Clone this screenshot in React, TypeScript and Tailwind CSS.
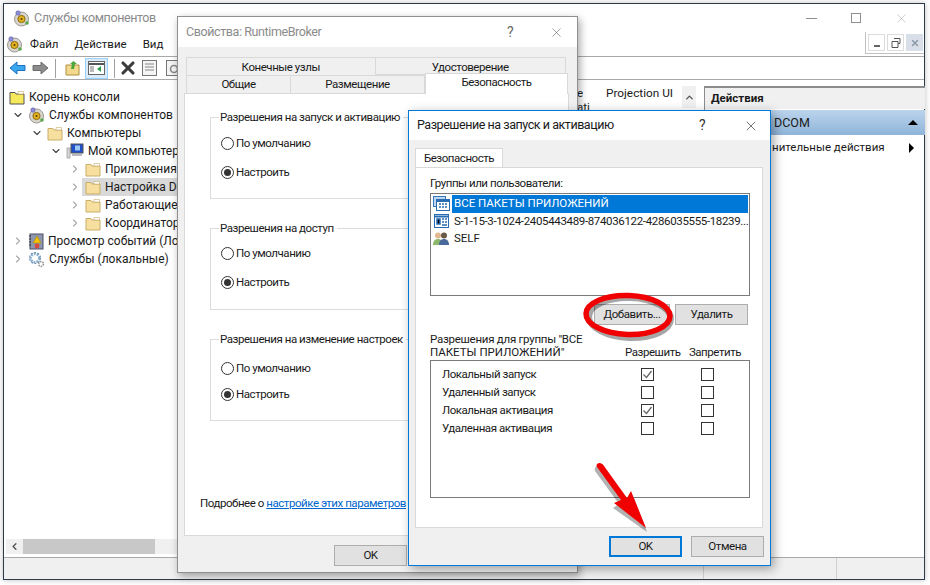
import { ChevronDown, ChevronRight, X } from "lucide-react";
import type { ReactNode } from "react";

const font = "font-['Roboto','Noto_Sans',sans-serif]";

function ServicesIcon() {
  return (
    <svg width="17" height="17" viewBox="0 0 17 17" className="shrink-0">
      <circle cx="8.5" cy="9" r="7" fill="#d8d4ce" stroke="#9c9890" />
      <circle cx="8.5" cy="9" r="3.6" fill="#e3b21c" stroke="#8a6a10" />
      <circle cx="8.5" cy="9" r="1.1" fill="#5a4208" />
      <circle cx="5" cy="3" r="2.2" fill="#8e8fd8" stroke="#5a5aa0" strokeWidth="0.6" />
      <circle cx="14" cy="13" r="1.8" fill="#58a848" />
    </svg>
  );
}

function FolderIcon({ root }: { root?: boolean }) {
  return (
    <svg width="16" height="15" viewBox="0 0 16 15" className="shrink-0">
      <path d="M1 2.5h5l1 1.5h8v10H1z" fill={root ? "#f6ea5c" : "#f7df9f"} stroke={root ? "#555" : "#c9ad68"} />
      <path d="M9 1.5h5.5v2.5H9z" fill="#fff" stroke="#c9ad68" strokeWidth="0.6" />
    </svg>
  );
}

function ComputerIcon() {
  return (
    <svg width="18" height="16" viewBox="0 0 18 16" className="shrink-0">
      <rect x="1" y="5" width="3" height="10" fill="#d8d8d8" stroke="#888" strokeWidth="0.6" />
      <rect x="5" y="1" width="12" height="9" fill="#1f50c8" stroke="#555" />
      <rect x="9" y="2.5" width="5" height="5" fill="#9cc8f4" />
      <rect x="6" y="11" width="10" height="2" fill="#b8b8c0" />
    </svg>
  );
}

function EventIcon() {
  return (
    <svg width="16" height="17" viewBox="0 0 16 17" className="shrink-0">
      <rect x="2" y="1" width="13" height="15" fill="#8e97ad" stroke="#4a5168" />
      <path d="M1 3h2M1 6h2M1 9h2M1 12h2" stroke="#333" />
      <path d="M9 3l4 7H5z" fill="#f2c200" stroke="#a37f00" strokeWidth="0.5" />
      <circle cx="9" cy="13" r="2.4" fill="#d84a3c" />
    </svg>
  );
}

function GearIcon() {
  return (
    <svg width="17" height="17" viewBox="0 0 17 17" className="shrink-0">
      <circle cx="7" cy="7" r="4.2" fill="none" stroke="#8fb2cf" strokeWidth="2.4" strokeDasharray="2 1" />
      <circle cx="7" cy="7" r="5.4" fill="none" stroke="#6f95b8" strokeWidth="1.2" strokeDasharray="2 1.4" />
      <circle cx="13" cy="13" r="2.4" fill="none" stroke="#9a9a9a" strokeWidth="1.6" strokeDasharray="1.5 0.8" />
    </svg>
  );
}

type TreeItem = { depth: number; label: string; icon: ReactNode; open?: boolean; arrow?: boolean; selected?: boolean };

const treeItems: TreeItem[] = [
  { depth: 0, label: "Корень консоли", icon: <FolderIcon root />, arrow: false },
  { depth: 0, label: "Службы компонентов", icon: <ServicesIcon />, open: true, arrow: true },
  { depth: 1, label: "Компьютеры", icon: <FolderIcon />, open: true, arrow: true },
  { depth: 2, label: "Мой компьютер", icon: <ComputerIcon />, open: true, arrow: true },
  { depth: 3, label: "Приложения COM+", icon: <FolderIcon />, arrow: true },
  { depth: 3, label: "Настройка DCOM", icon: <FolderIcon />, arrow: true, selected: true },
  { depth: 3, label: "Работающие процессы", icon: <FolderIcon />, arrow: true },
  { depth: 3, label: "Координатор DTC", icon: <FolderIcon />, arrow: true },
  { depth: 0, label: "Просмотр событий (Локальный)", icon: <EventIcon />, arrow: true },
  { depth: 0, label: "Службы (локальные)", icon: <GearIcon />, arrow: true },
];

function TreeRow({ item }: { item: TreeItem }) {
  return (
    <div className="flex h-[18px] items-center whitespace-nowrap text-[12px]" style={{ paddingLeft: item.arrow ? item.depth * 19 + 7 : 2 }}>
      {item.arrow && (
        <span className="flex w-[14px] shrink-0 justify-center">
          {item.open ? (
            <ChevronDown size={12} strokeWidth={2.2} className="text-[#444]" />
          ) : (
            <ChevronRight size={12} strokeWidth={2.2} className="text-[#a6a6a6]" />
          )}
        </span>
      )}
      <span className={`flex h-[18px] items-center gap-[3px] pl-[3px] pr-[2px] ${item.selected ? "bg-[#d9d9d9]" : ""}`}>
        {item.icon}
        <span className="ml-[1px]">{item.label}</span>
      </span>
    </div>
  );
}

function NavArrow({ color, edge, flip }: { color: string; edge: string; flip?: boolean }) {
  return (
    <svg width="17" height="14" viewBox="0 0 17 14" className={flip ? "rotate-180" : ""}>
      <path d="M1 7l7-6v3.5h8v5H8V13z" fill={color} stroke={edge} />
    </svg>
  );
}

function Toolbar() {
  return (
    <div className="flex h-[24px] items-center border-y border-[#a9a9a9] pl-[5px]">
      <NavArrow color="#39a7ee" edge="#1e6fc0" />
      <span className="ml-[6px]">
        <NavArrow color="#8c8c8c" edge="#6c6c6c" flip />
      </span>
      <div className="ml-[6px] h-[19px] w-px bg-[#a0a0a0]" />
      <span className="ml-[9px]">
        <svg width="15" height="16" viewBox="0 0 15 16">
          <path d="M1 5h13v10H1z" fill="#f2d98e" stroke="#b09040" />
          <path d="M6 9l1-5-2 0 3.5-3L12 4h-2L9 9z" fill="#4aa83a" />
        </svg>
      </span>
      <span className="ml-[5px] flex h-[21px] w-[23px] items-center justify-center border border-[#99d1ff] bg-[#d9ebf9]">
        <svg width="17" height="14" viewBox="0 0 17 14">
          <rect x="0.5" y="0.5" width="16" height="13" fill="#fff" stroke="#666" />
          <path d="M1 3h15" stroke="#555" strokeWidth="2" />
          <path d="M2 6h4M2 8h4M2 10h4" stroke="#777" />
          <path d="M13 5v6l-4-3z" fill="#2f9e4f" />
        </svg>
      </span>
      <div className="ml-[6px] h-[19px] w-px bg-[#a0a0a0]" />
      <X size={20} strokeWidth={3.8} className="ml-[3px] text-[#3c3c3c]" />
      <svg width="15" height="16" viewBox="0 0 15 16" className="ml-[4px]">
        <rect x="0.5" y="0.5" width="14" height="15" fill="#f4f4f4" stroke="#777" />
        <path d="M3 4h9M3 7h9M3 10h9" stroke="#888" />
      </svg>
      <svg width="15" height="16" viewBox="0 0 15 16" className="ml-[9px]">
        <rect x="0.5" y="0.5" width="14" height="15" fill="#f4f4f4" stroke="#777" />
        <circle cx="8" cy="9" r="3.5" fill="none" stroke="#888" strokeWidth="1.6" />
      </svg>
    </div>
  );
}

function ActionsPane() {
  return (
    <div className="ml-[3px] mt-[6px] flex w-[221px] shrink-0 flex-col border-l border-t-2 border-[#8c8c8c]">
      <div className="flex h-[21px] items-center bg-[#f0f0f0] pl-[6px] pt-px font-bold">Действия</div>
      <div className="mt-px flex h-[25px] items-center justify-between bg-gradient-to-b from-[#bcd4ec] to-[#8fb4d9] pl-[69px] pr-[7px]">
        <span className="pt-px text-[12.5px]">DCOM</span>
        <span className="h-0 w-0 border-x-[5px] border-b-[5px] border-x-transparent border-b-black" />
      </div>
      <div className="mt-[1px] flex h-[24px] items-center justify-between pl-[2px] pr-[11px]">
        <span className="whitespace-nowrap pl-[65px]">нительные действия</span>
        <span className="h-0 w-0 border-y-[5px] border-l-[5px] border-y-transparent border-l-black" />
      </div>
    </div>
  );
}

function ListPane() {
  return (
    <div className="ml-[3px] flex flex-1 pt-[6px]">
      <div className="flex w-[29px] flex-col leading-[14px]">
        <span>e</span>
        <span>ati</span>
      </div>
      <span className="w-[76px] text-[11.8px] leading-[14px]">Projection UI</span>
      <span className="flex h-[22px] w-[14px] items-center justify-center bg-[#f0f0f0]">
        <ChevronDown size={11} strokeWidth={3} className="rotate-180 text-[#555]" />
      </span>
    </div>
  );
}

function MainWindow() {
  return (
    <div className="absolute left-[3px] top-[3px] flex h-[577px] w-[922px] flex-col border border-[#2b3b4c] bg-white shadow-[0_0_6px_rgba(0,0,0,0.25)]">
      <div className="flex h-[28px] shrink-0 items-center pl-[9px] text-[12.5px] text-[#8b8b8b]">
        <ServicesIcon />
        <span className="ml-[4px] pt-px tracking-[-0.4px]">Службы компонентов</span>
        <div className="ml-auto flex items-center">
          <span className="h-px w-[11px] bg-[#8f8f8f]" />
          <span className="ml-[34px] h-[10px] w-[10px] border border-[#8f8f8f]" />
          <X size={15} strokeWidth={1} className="ml-[33px] mr-[15px] text-[#b0b0b0]" />
        </div>
      </div>
      <div className="flex h-[24px] shrink-0 items-center pl-[2px]">
        <ServicesIcon />
        <span className="ml-[7px] pt-px">Файл</span>
        <span className="ml-[16px] pt-px">Действие</span>
        <span className="ml-[16px] pt-px">Вид</span>
        <div className="ml-auto flex h-[22px] items-center gap-[2px] self-start border-b border-l border-[#c0c0c0] pl-[2px] pr-[1px] text-[#555]">
          <span className="flex h-[17px] w-[17px] items-end justify-center border border-[#dcdcdc] pb-[3px]">
            <span className="h-[2px] w-[6px] bg-[#666]" />
          </span>
          <span className="flex h-[17px] w-[17px] items-center justify-center border border-[#dcdcdc]">
            <svg width="10" height="10" viewBox="0 0 10 10">
              <path d="M3 0.5h6v5H7M1 3.5h6v6H1z" fill="none" stroke="#555" />
            </svg>
          </span>
          <span className="flex h-[17px] w-[17px] items-center justify-center bg-[#d8dfe8]">
            <X size={10} strokeWidth={3.4} className="text-[#8a98a8]" />
          </span>
        </div>
      </div>
      <Toolbar />
      <div className="flex min-h-0 flex-1">
        <div className="flex w-[697px] shrink-0 flex-col">
          <div className="flex min-h-0 flex-1 overflow-hidden">
            <div className="w-[570px] shrink-0 pt-[8px]">
              {treeItems.map((item) => (
                <TreeRow key={item.label} item={item} />
              ))}
            </div>
            <ListPane />
          </div>
          <div className="mb-[3px] ml-[2px] flex h-[15px] shrink-0 items-stretch bg-[#f0f0f0]">
            <span className="flex w-[17px] items-center justify-center">
              <ChevronRight size={11} strokeWidth={3} className="rotate-180 text-[#555]" />
            </span>
            <span className="w-[132px] bg-[#c8c8c8]" />
          </div>
        </div>
        <div className="flex flex-1 flex-col">
          <ActionsPane />
        </div>
      </div>
      <div className="flex h-[22px] shrink-0 border-t border-[#a9a9a9] bg-[#f0f0f0]">
        <span className="w-[700px] border-r border-[#d0d0d0]" />
        <span className="w-[133px] border-r border-[#d0d0d0]" />
      </div>
    </div>
  );
}

function Radio({ label, checked }: { label: string; checked?: boolean }) {
  return (
    <div className="flex h-[17px] items-center gap-[2px]">
      <span className="flex h-[13px] w-[13px] items-center justify-center rounded-full border border-[#333] bg-white">
        {checked && <span className="h-[7px] w-[7px] rounded-full bg-[#333]" />}
      </span>
      <span>{label}</span>
    </div>
  );
}

function RadioGroup({ title, top, gap }: { title: string; top: string; gap: string }) {
  return (
    <fieldset className="h-[89px] w-[240px] border border-[#dcdcdc] pl-[10px]">
      <legend className="-ml-[2px] whitespace-nowrap pl-px pr-[3px] leading-[14px]">{title}</legend>
      <div className={`flex flex-col ${top} ${gap}`}>
        <Radio label="По умолчанию" />
        <Radio label="Настроить" checked />
      </div>
    </fieldset>
  );
}

function DialogButton({ label, width, primary }: { label: string; width: string; primary?: boolean }) {
  return (
    <button
      className={`flex h-[21px] items-center justify-center bg-[#e1e1e1] ${width} ${
        primary ? "border-2 border-[#0078d7]" : "border border-[#adadad]"
      }`}
    >
      {label}
    </button>
  );
}

function PropertiesDialog() {
  return (
    <div className="absolute left-[177px] top-[16px] flex h-[557px] w-[401px] flex-col border border-[#8f8f8f] bg-[#f0f0f0] tracking-[-0.45px] shadow-[2px_3px_8px_rgba(0,0,0,0.35)]">
      <div className="flex h-[30px] shrink-0 items-center bg-white pl-[8px] text-[12.5px] text-[#8b8b8b]">
        <span className="w-[321px] tracking-[-0.4px]">Свойства: RuntimeBroker</span>
        <span className="text-[14px] text-[#666]">?</span>
        <X size={15} strokeWidth={1} className="ml-[36px] text-[#666]" />
      </div>
      <div className="mx-[7px] mt-[10px] flex h-[18px] w-[381px] shrink-0 pl-[1px] text-center">
        <span className="w-[190px] border border-b-0 border-[#d9d9d9] pt-px">Конечные узлы</span>
        <span className="w-[191px] border-y border-r border-[#d9d9d9] pt-px">Удостоверение</span>
      </div>
      <div className="relative z-10 mx-[7px] flex h-[18px] w-[383px] shrink-0 pl-[1px] text-center">
        <span className="w-[105px] border border-b-0 border-[#d9d9d9]">Общие</span>
        <span className="w-[134px] border-r border-t border-[#d9d9d9]">Размещение</span>
        <span className="-mt-[2px] h-[21px] w-[143px] border-x border-t border-[#d9d9d9] bg-white">Безопасность</span>
      </div>
      <div className="mx-[6px] flex h-[443px] w-[385px] shrink-0 flex-col border border-[#d9d9d9] bg-white pl-[25px] pt-[16px]">
        <div className="flex flex-col gap-[22px]">
          <RadioGroup title="Разрешения на запуск и активацию" top="pt-[11px]" gap="gap-[12px]" />
          <RadioGroup title="Разрешения на доступ" top="pt-[10px]" gap="gap-[12px]" />
          <RadioGroup title="Разрешения на изменение настроек" top="pt-[14px]" gap="gap-[9px]" />
        </div>
        <p className="-ml-[10px] mt-[74px] whitespace-nowrap">
          Подробнее о <span className="text-[#0066cc] underline">настройке этих параметров</span>
        </p>
      </div>
      <div className="ml-[156px] mt-[9px]">
        <DialogButton label="OK" width="w-[73px]" />
      </div>
    </div>
  );
}

const permissions = [
  { label: "Локальный запуск", allow: true },
  { label: "Удаленный запуск", allow: false },
  { label: "Локальная активация", allow: true },
  { label: "Удаленная активация", allow: false },
];

function Checkbox({ checked }: { checked?: boolean }) {
  return (
    <span className="flex h-[13px] w-[13px] items-center justify-center border border-[#333] bg-white">
      {checked && (
        <svg width="11" height="11" viewBox="0 0 11 11">
          <path d="M1.5 5.5l3 3 5-6.5" fill="none" stroke="#666" strokeWidth="1.3" />
        </svg>
      )}
    </span>
  );
}

function AccountRow({ label, icon, selected, spacing }: { label: string; icon: ReactNode; selected?: boolean; spacing: string }) {
  return (
    <div className="flex h-[17.5px] items-center">
      <span className="flex w-[21px] shrink-0 justify-center">{icon}</span>
      <span
        className={`h-[17.5px] flex-1 whitespace-nowrap pl-[2px] leading-[17px] ${spacing} ${
          selected ? "bg-[#0078d7] text-white" : ""
        }`}
      >
        {label}
      </span>
    </div>
  );
}

function PackageIcon() {
  return (
    <svg width="17" height="15" viewBox="0 0 17 15">
      <rect x="0.5" y="0.5" width="12" height="10" fill="#bcd7f0" stroke="#3a78bc" />
      <rect x="3.5" y="3.5" width="13" height="11" fill="#fff" stroke="#2a6cb4" />
      <path d="M4 5h12" stroke="#2a6cb4" strokeWidth="2" />
      <path d="M6 8h2M9 8h2M12 8h2M6 11h2M9 11h2M12 11h2" stroke="#2a6cb4" strokeWidth="1.5" />
    </svg>
  );
}

function SidIcon() {
  return (
    <svg width="15" height="14" viewBox="0 0 15 14">
      <rect x="0.5" y="0.5" width="14" height="13" fill="#fff" stroke="#2a6cb4" />
      <path d="M1 2.5h13" stroke="#2a6cb4" strokeWidth="2" />
      <path d="M8 5h2M11 5h2M8 8h2M11 8h2M3 5h3v5H3zM8 11h5" stroke="#2a6cb4" strokeWidth="1.5" />
    </svg>
  );
}

function UsersIcon() {
  return (
    <svg width="17" height="15" viewBox="0 0 17 15">
      <circle cx="5" cy="4.5" r="3" fill="#e2b98c" />
      <path d="M0 14c0-4 2-6 5-6s5 2 5 6z" fill="#8cb86c" />
      <circle cx="11" cy="4.5" r="3" fill="#6c5a48" />
      <path d="M6 14c0-4 2-6 5-6s5 2 5 6z" fill="#4a6a9c" />
    </svg>
  );
}

function PermissionDialog() {
  return (
    <div className="absolute left-[408px] top-[110px] flex h-[456px] w-[363px] flex-col border border-[#0078d7] bg-[#f0f0f0] tracking-[-0.45px] shadow-[3px_3px_10px_rgba(0,0,0,0.35)]">
      <div className="flex h-[29px] shrink-0 items-center bg-white pl-[8px] text-[12.5px]">
        <span className="w-[282px]">Разрешение на запуск и активацию</span>
        <span className="text-[14px] text-[#333]">?</span>
        <X size={16} strokeWidth={1} className="ml-[38px] text-[#333]" />
      </div>
      <div className="ml-[6px] mt-[8px] flex h-[20px] w-[88px] shrink-0 items-center justify-center border-x border-t border-[#d9d9d9] bg-white">
        Безопасность
      </div>
      <div className="-mt-px ml-[6px] flex h-[361px] w-[348px] shrink-0 flex-col border border-[#d9d9d9] bg-white pl-[14px]">
        <div className="mt-[7px] h-[17px]">Группы или пользователи:</div>
        <div className="mt-[1px] flex h-[103px] w-[320px] flex-col border border-[#7a7a7a] pr-px pt-px">
          <AccountRow label="ВСЕ ПАКЕТЫ ПРИЛОЖЕНИЙ" icon={<PackageIcon />} selected spacing="tracking-normal" />
          <AccountRow
            label="S-1-15-3-1024-2405443489-874036122-4286035555-18239..."
            icon={<SidIcon />}
            spacing="tracking-[-0.34px]"
          />
          <AccountRow label="SELF" icon={<UsersIcon />} spacing="tracking-normal" />
        </div>
        <div className="mt-[8px] flex w-[318px] justify-end gap-[5px]">
          <DialogButton label="Добавить..." width="w-[76px]" />
          <DialogButton label="Удалить" width="w-[73px]" />
        </div>
        <div className="mt-[5px] flex h-[29px] w-[320px] items-end leading-[13px]">
          <span className="w-[195px]">
            <span className="tracking-[-0.26px]">Разрешения для группы "ВСЕ</span>
            <br />
            <span className="tracking-normal">ПАКЕТЫ ПРИЛОЖЕНИЙ"</span>
          </span>
          <span className="w-[54px] text-center">Разрешить</span>
          <span className="ml-[5px] w-[62px] text-center">Запретить</span>
        </div>
        <div className="mt-[1px] h-[138px] w-[320px] border border-[#7a7a7a] pl-[11px] pt-[4px]">
          {permissions.map((permission) => (
            <div key={permission.label} className="flex h-[18px] items-center">
              <span className="w-[199px] pt-px">{permission.label}</span>
              <span className="w-[60px]">
                <Checkbox checked={permission.allow} />
              </span>
              <Checkbox />
            </div>
          ))}
        </div>
      </div>
      <div className="ml-[200px] mt-[8px] flex gap-[9px]">
        <DialogButton label="OK" width="w-[73px]" primary />
        <DialogButton label="Отмена" width="w-[73px]" />
      </div>
    </div>
  );
}

function Annotations() {
  return (
    <svg width="930" height="585" viewBox="0 0 930 585" className="pointer-events-none absolute left-0 top-0">
      <ellipse cx="630" cy="318" rx="41" ry="20" fill="none" stroke="#000" strokeOpacity="0.35" strokeWidth="6" transform="rotate(2 630 318)" />
      <ellipse cx="628" cy="315" rx="42" ry="19.5" fill="none" stroke="#f00000" strokeWidth="5.5" transform="rotate(2 628 315)" />
      <path d="M603 468l27 34 4-4 13 34-34-24 6-4-24-33a4 4 0 0 1 8-3z" fill="#000" fillOpacity="0.3" />
      <path d="M604 466l23 32 4-7 15 37-32-25 7-3-24-33c-2-4 4-6 7-1z" fill="#f00000" />
    </svg>
  );
}

export default function App() {
  return (
    <div className={`relative h-[585px] w-[930px] overflow-hidden bg-white text-[11.5px] text-[#1a1a1a] ${font}`}>
      <MainWindow />
      <PropertiesDialog />
      <PermissionDialog />
      <Annotations />
    </div>
  );
}
